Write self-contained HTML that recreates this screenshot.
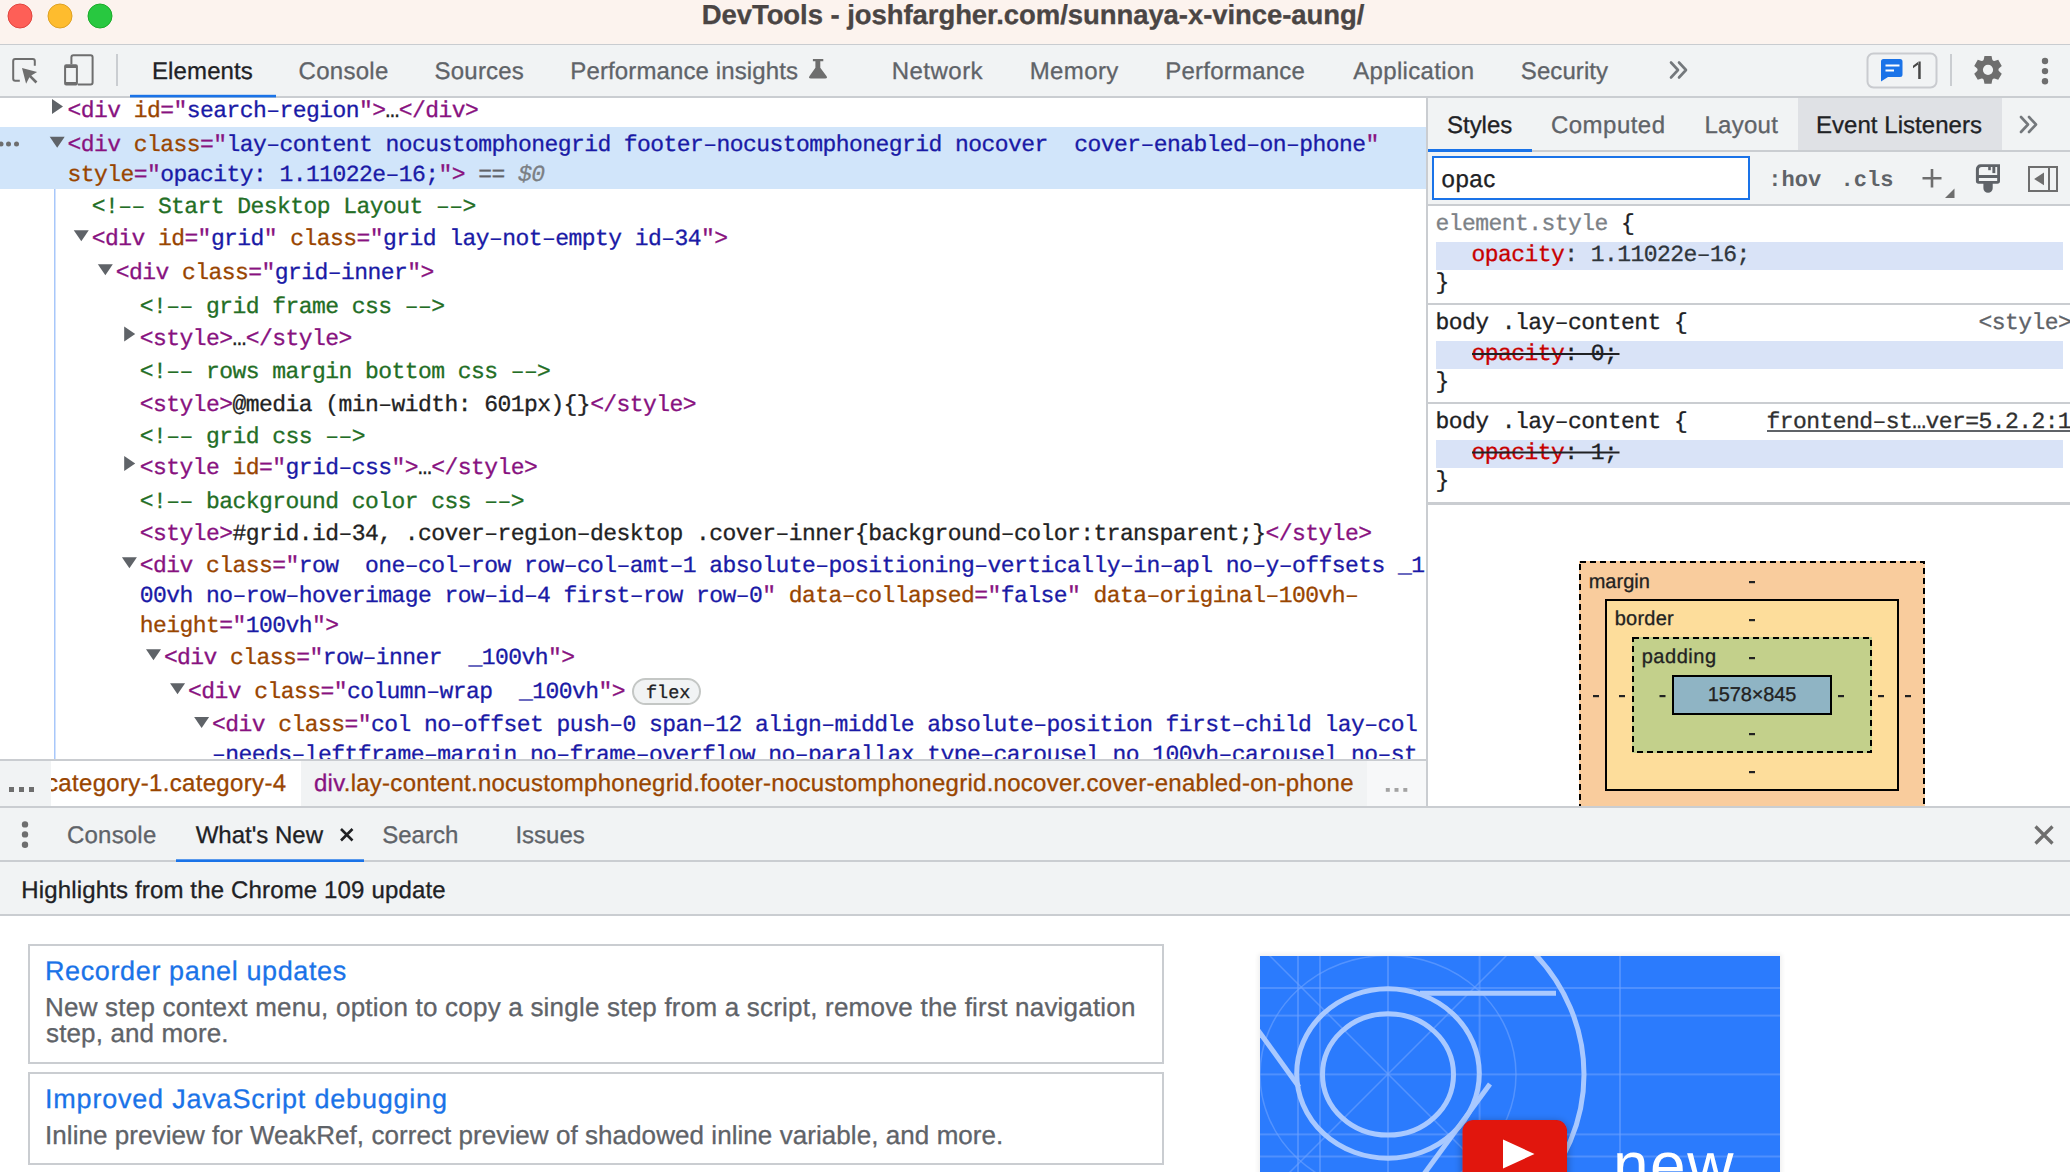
<!DOCTYPE html>
<html><head><meta charset="utf-8"><title>DevTools</title>
<style>html,body{margin:0;padding:0;background:#fff;overflow:hidden} svg{display:block} text{text-rendering:geometricPrecision}</style>
</head><body>
<svg width="2070" height="1172" viewBox="0 0 2070 1172">
<defs>
<clipPath id="elclip"><rect x="0" y="98" width="1426" height="661"/></clipPath>
<clipPath id="bcclip"><rect x="51" y="761" width="250" height="46"/></clipPath>
<filter id="blur" x="-10%" y="-10%" width="120%" height="120%"><feGaussianBlur stdDeviation="2"/></filter>
<filter id="sh" x="-30%" y="-30%" width="160%" height="160%"><feDropShadow dx="0" dy="2" stdDeviation="4" flood-opacity="0.35"/></filter>
</defs>
<rect x="0" y="0" width="2070" height="1172" fill="#ffffff" />
<rect x="0" y="0" width="2070" height="44" fill="#fcf3ee" />
<rect x="0" y="44" width="2070" height="1" fill="#c9ccd0" />
<rect x="0" y="45" width="2070" height="1" fill="#e4e6e9" />
<rect x="0" y="45" width="2070" height="51" fill="#f1f3f4" />
<rect x="0" y="96" width="2070" height="2" fill="#cacdd1" />
<circle cx="20" cy="16" r="12" fill="#fe5f57" stroke="#e0443e" stroke-width="1"/>
<circle cx="60" cy="16" r="12" fill="#febc2e" stroke="#dea123" stroke-width="1"/>
<circle cx="100" cy="16" r="12" fill="#28c840" stroke="#1aab29" stroke-width="1"/>
<text x="701.70" y="24" fill="#4a4544" stroke="#4a4544" stroke-width="0.3" font-family="Liberation Sans" font-size="27.5" font-weight="700" letter-spacing="-0.064" xml:space="preserve" >DevTools - joshfargher.com/sunnaya-x-vince-aung/</text>
<path d="M19.8 80.8 H15.2 A2 2 0 0 1 13.2 78.8 V60.9 A2 2 0 0 1 15.2 58.9 H32.8 A2 2 0 0 1 34.8 60.9 V65.8" fill="none" stroke="#6e6e6e" stroke-width="2"/>
<path d="M22 68 L37.1 72.1 L31.3 75.4 L37.4 81.5 L35.5 83.4 L29.4 77.3 L26.1 83.7 Z" fill="#6e6e6e"/>
<path d="M71.4 64.2 V57.2 A2 2 0 0 1 73.4 55.2 H90.6 A2 2 0 0 1 92.6 57.2 V82.6 A2 2 0 0 1 90.6 84.6 H77.9" fill="none" stroke="#6e6e6e" stroke-width="2"/>
<path d="M66.1 64.2 H75.9 A2 2 0 0 1 77.9 66.2 V83.6 A2 2 0 0 1 75.9 85.6 H66.1 A2 2 0 0 1 64.1 83.6 V66.2 A2 2 0 0 1 66.1 64.2 Z M66.1 68 V82.1 H75.9 V68 Z" fill="#6e6e6e" fill-rule="evenodd"/>
<rect x="116" y="54" width="2" height="32" fill="#cacdd1" />
<text x="152.00" y="79" fill="#202124" stroke="#202124" stroke-width="0.3" font-family="Liberation Sans" font-size="24" font-weight="400" letter-spacing="0.114" xml:space="preserve" >Elements</text>
<text x="298.60" y="79" fill="#5f6368" stroke="#5f6368" stroke-width="0.3" font-family="Liberation Sans" font-size="24" font-weight="400" letter-spacing="0.267" xml:space="preserve" >Console</text>
<text x="434.60" y="79" fill="#5f6368" stroke="#5f6368" stroke-width="0.3" font-family="Liberation Sans" font-size="24" font-weight="400" letter-spacing="0.200" xml:space="preserve" >Sources</text>
<text x="570.30" y="79" fill="#5f6368" stroke="#5f6368" stroke-width="0.3" font-family="Liberation Sans" font-size="24" font-weight="400" letter-spacing="0.121" xml:space="preserve" >Performance insights</text>
<text x="891.70" y="79" fill="#5f6368" stroke="#5f6368" stroke-width="0.3" font-family="Liberation Sans" font-size="24" font-weight="400" letter-spacing="0.483" xml:space="preserve" >Network</text>
<text x="1029.70" y="79" fill="#5f6368" stroke="#5f6368" stroke-width="0.3" font-family="Liberation Sans" font-size="24" font-weight="400" letter-spacing="0.380" xml:space="preserve" >Memory</text>
<text x="1165.30" y="79" fill="#5f6368" stroke="#5f6368" stroke-width="0.3" font-family="Liberation Sans" font-size="24" font-weight="400" letter-spacing="0.220" xml:space="preserve" >Performance</text>
<text x="1353.20" y="79" fill="#5f6368" stroke="#5f6368" stroke-width="0.3" font-family="Liberation Sans" font-size="24" font-weight="400" letter-spacing="0.340" xml:space="preserve" >Application</text>
<text x="1520.80" y="79" fill="#5f6368" stroke="#5f6368" stroke-width="0.3" font-family="Liberation Sans" font-size="24" font-weight="400" letter-spacing="0.086" xml:space="preserve" >Security</text>
<rect x="130" y="94.8" width="146" height="2.6" fill="#1a73e8" />
<path d="M812.9 59 H823.3 V61.2 H820.3 V67.7 L826.6 76.2 Q827.8 78.4 825.2 78.4 H810.8 Q808.2 78.4 809.4 76.2 L815.4 67.7 V61.2 H812.9 Z" fill="#6e6e6e"/>
<path d="M1671 62.5 L1678 70.0 L1671 77.5 M1679 62.5 L1686 70.0 L1679 77.5" fill="none" stroke="#74787c" stroke-width="2.6" stroke-linecap="round" stroke-linejoin="round"/>
<rect x="1867.5" y="53.5" width="69" height="34" rx="6" fill="none" stroke="#c9cbcf" stroke-width="2"/>
<path d="M1884 59 H1900 A2.5 2.5 0 0 1 1902.5 61.5 V74.5 A2.5 2.5 0 0 1 1900 77 H1888 L1881 81.5 V61.5 A2.5 2.5 0 0 1 1883.5 59 Z" fill="#1a73e8"/>
<rect x="1885.5" y="64.5" width="14" height="2" fill="#ffffff" />
<rect x="1885.5" y="69.5" width="8.5" height="2" fill="#ffffff" />
<path d="M1918.2 61.5 H1920.7 V79 H1918.2 Z M1918.6 61.5 L1913 65.8 L1913 68.3 L1918.6 64.3 Z" fill="#474747"/>
<rect x="1950" y="54" width="2" height="32" fill="#cacdd1" />
<path d="M1983.84 59.08 L1984.46 55.94 L1991.54 55.94 L1992.16 59.08 L1992.46 60.07 L1993.23 60.75 L1994.19 61.07 L1995.21 60.84 L1998.23 59.81 L2001.77 65.94 L1999.36 68.04 L1998.65 68.80 L1998.45 69.80 L1998.65 70.80 L1999.36 71.56 L2001.77 73.66 L1998.23 79.79 L1995.21 78.76 L1994.19 78.53 L1993.22 78.85 L1992.46 79.53 L1992.16 80.52 L1991.54 83.66 L1984.46 83.66 L1983.84 80.52 L1983.54 79.53 L1982.77 78.85 L1981.81 78.53 L1980.79 78.76 L1977.77 79.79 L1974.23 73.66 L1976.64 71.56 L1977.35 70.80 L1977.55 69.80 L1977.35 68.80 L1976.64 68.04 L1974.23 65.94 L1977.77 59.81 L1980.79 60.84 L1981.81 61.07 L1982.78 60.75 L1983.54 60.07 Z M1993.1 69.8 A5.1 5.1 0 1 0 1982.9 69.8 A5.1 5.1 0 1 0 1993.1 69.8 Z" fill="#6e6e6e" fill-rule="evenodd"/>
<circle cx="2045" cy="61" r="3.2" fill="#6e6e6e"/>
<circle cx="2045" cy="71.1" r="3.2" fill="#6e6e6e"/>
<circle cx="2045" cy="81.2" r="3.2" fill="#6e6e6e"/>
<rect x="0" y="127" width="1426" height="62" fill="#d1e5fa" />
<rect x="54" y="189" width="1.5" height="570" fill="#a8c7fa" />
<circle cx="1" cy="144" r="2.5" fill="#6e6e6e"/>
<circle cx="8.5" cy="144" r="2.5" fill="#6e6e6e"/>
<circle cx="16.5" cy="144" r="2.5" fill="#6e6e6e"/>
<g clip-path="url(#elclip)">
<text x="67.6" y="117" font-family="Liberation Mono" font-size="23.0" letter-spacing="-0.558" xml:space="preserve" ><tspan fill="#881280" stroke="#881280" stroke-width="0.3" >&lt;div</tspan><tspan fill="#994500" stroke="#994500" stroke-width="0.3" > id</tspan><tspan fill="#881280" stroke="#881280" stroke-width="0.3" >="</tspan><tspan fill="#1a1aa6" stroke="#1a1aa6" stroke-width="0.3" >search–region</tspan><tspan fill="#881280" stroke="#881280" stroke-width="0.3" >"&gt;</tspan><tspan fill="#222222" stroke="#222222" stroke-width="0.3" >…</tspan><tspan fill="#881280" stroke="#881280" stroke-width="0.3" >&lt;/div&gt;</tspan></text>
<path d="M51.99999999999999 99 L62.99999999999999 106.5 L51.99999999999999 114 Z" fill="#5f6368"/>
<text x="67.6" y="151" font-family="Liberation Mono" font-size="23.0" letter-spacing="-0.558" xml:space="preserve" ><tspan fill="#881280" stroke="#881280" stroke-width="0.3" >&lt;div</tspan><tspan fill="#994500" stroke="#994500" stroke-width="0.3" > class</tspan><tspan fill="#881280" stroke="#881280" stroke-width="0.3" >="</tspan><tspan fill="#1a1aa6" stroke="#1a1aa6" stroke-width="0.3" >lay–content nocustomphonegrid footer–nocustomphonegrid nocover  cover–enabled–on–phone</tspan><tspan fill="#881280" stroke="#881280" stroke-width="0.3" >"</tspan></text>
<path d="M49.699999999999996 136.8 L64.69999999999999 136.8 L57.199999999999996 147.8 Z" fill="#5f6368"/>
<text x="67.6" y="181" font-family="Liberation Mono" font-size="23.0" letter-spacing="-0.558" xml:space="preserve" ><tspan fill="#994500" stroke="#994500" stroke-width="0.3" >style</tspan><tspan fill="#881280" stroke="#881280" stroke-width="0.3" >="</tspan><tspan fill="#1a1aa6" stroke="#1a1aa6" stroke-width="0.3" >opacity: 1.11022e–16;</tspan><tspan fill="#881280" stroke="#881280" stroke-width="0.3" >"</tspan><tspan fill="#881280" stroke="#881280" stroke-width="0.3" >&gt;</tspan><tspan fill="#5f6368" stroke="#5f6368" stroke-width="0.3" > == </tspan><tspan fill="#7b7f84" stroke="#7b7f84" stroke-width="0.3" font-style="italic">$0</tspan></text>
<text x="91.66999999999999" y="213" font-family="Liberation Mono" font-size="23.0" letter-spacing="-0.558" xml:space="preserve" ><tspan fill="#236e25" stroke="#236e25" stroke-width="0.3" >&lt;!–– Start Desktop Layout ––&gt;</tspan></text>
<text x="91.66999999999999" y="244.5" font-family="Liberation Mono" font-size="23.0" letter-spacing="-0.558" xml:space="preserve" ><tspan fill="#881280" stroke="#881280" stroke-width="0.3" >&lt;div</tspan><tspan fill="#994500" stroke="#994500" stroke-width="0.3" > id</tspan><tspan fill="#881280" stroke="#881280" stroke-width="0.3" >="</tspan><tspan fill="#1a1aa6" stroke="#1a1aa6" stroke-width="0.3" >grid</tspan><tspan fill="#881280" stroke="#881280" stroke-width="0.3" >"</tspan><tspan fill="#994500" stroke="#994500" stroke-width="0.3" > class</tspan><tspan fill="#881280" stroke="#881280" stroke-width="0.3" >="</tspan><tspan fill="#1a1aa6" stroke="#1a1aa6" stroke-width="0.3" >grid lay–not–empty id–34</tspan><tspan fill="#881280" stroke="#881280" stroke-width="0.3" >"&gt;</tspan></text>
<path d="M73.76999999999998 230.3 L88.76999999999998 230.3 L81.26999999999998 241.3 Z" fill="#5f6368"/>
<text x="115.74" y="278.5" font-family="Liberation Mono" font-size="23.0" letter-spacing="-0.558" xml:space="preserve" ><tspan fill="#881280" stroke="#881280" stroke-width="0.3" >&lt;div</tspan><tspan fill="#994500" stroke="#994500" stroke-width="0.3" > class</tspan><tspan fill="#881280" stroke="#881280" stroke-width="0.3" >="</tspan><tspan fill="#1a1aa6" stroke="#1a1aa6" stroke-width="0.3" >grid–inner</tspan><tspan fill="#881280" stroke="#881280" stroke-width="0.3" >"&gt;</tspan></text>
<path d="M97.84 264.3 L112.84 264.3 L105.34 275.3 Z" fill="#5f6368"/>
<text x="139.81" y="312.5" font-family="Liberation Mono" font-size="23.0" letter-spacing="-0.558" xml:space="preserve" ><tspan fill="#236e25" stroke="#236e25" stroke-width="0.3" >&lt;!–– grid frame css ––&gt;</tspan></text>
<text x="139.81" y="344.5" font-family="Liberation Mono" font-size="23.0" letter-spacing="-0.558" xml:space="preserve" ><tspan fill="#881280" stroke="#881280" stroke-width="0.3" >&lt;style&gt;</tspan><tspan fill="#222222" stroke="#222222" stroke-width="0.3" >…</tspan><tspan fill="#881280" stroke="#881280" stroke-width="0.3" >&lt;/style&gt;</tspan></text>
<path d="M124.21000000000001 326.5 L135.21 334.0 L124.21000000000001 341.5 Z" fill="#5f6368"/>
<text x="139.81" y="378.3" font-family="Liberation Mono" font-size="23.0" letter-spacing="-0.558" xml:space="preserve" ><tspan fill="#236e25" stroke="#236e25" stroke-width="0.3" >&lt;!–– rows margin bottom css ––&gt;</tspan></text>
<text x="139.81" y="410.5" font-family="Liberation Mono" font-size="23.0" letter-spacing="-0.558" xml:space="preserve" ><tspan fill="#881280" stroke="#881280" stroke-width="0.3" >&lt;style&gt;</tspan><tspan fill="#222222" stroke="#222222" stroke-width="0.3" >@media (min–width: 601px){}</tspan><tspan fill="#881280" stroke="#881280" stroke-width="0.3" >&lt;/style&gt;</tspan></text>
<text x="139.81" y="442.5" font-family="Liberation Mono" font-size="23.0" letter-spacing="-0.558" xml:space="preserve" ><tspan fill="#236e25" stroke="#236e25" stroke-width="0.3" >&lt;!–– grid css ––&gt;</tspan></text>
<text x="139.81" y="474" font-family="Liberation Mono" font-size="23.0" letter-spacing="-0.558" xml:space="preserve" ><tspan fill="#881280" stroke="#881280" stroke-width="0.3" >&lt;style</tspan><tspan fill="#994500" stroke="#994500" stroke-width="0.3" > id</tspan><tspan fill="#881280" stroke="#881280" stroke-width="0.3" >="</tspan><tspan fill="#1a1aa6" stroke="#1a1aa6" stroke-width="0.3" >grid–css</tspan><tspan fill="#881280" stroke="#881280" stroke-width="0.3" >"&gt;</tspan><tspan fill="#222222" stroke="#222222" stroke-width="0.3" >…</tspan><tspan fill="#881280" stroke="#881280" stroke-width="0.3" >&lt;/style&gt;</tspan></text>
<path d="M124.21000000000001 456 L135.21 463.5 L124.21000000000001 471 Z" fill="#5f6368"/>
<text x="139.81" y="508" font-family="Liberation Mono" font-size="23.0" letter-spacing="-0.558" xml:space="preserve" ><tspan fill="#236e25" stroke="#236e25" stroke-width="0.3" >&lt;!–– background color css ––&gt;</tspan></text>
<text x="139.81" y="540" font-family="Liberation Mono" font-size="23.0" letter-spacing="-0.558" xml:space="preserve" ><tspan fill="#881280" stroke="#881280" stroke-width="0.3" >&lt;style&gt;</tspan><tspan fill="#222222" stroke="#222222" stroke-width="0.3" >#grid.id–34, .cover–region–desktop .cover–inner{background–color:transparent;}</tspan><tspan fill="#881280" stroke="#881280" stroke-width="0.3" >&lt;/style&gt;</tspan></text>
<text x="139.81" y="571.5" font-family="Liberation Mono" font-size="23.0" letter-spacing="-0.558" xml:space="preserve" ><tspan fill="#881280" stroke="#881280" stroke-width="0.3" >&lt;div</tspan><tspan fill="#994500" stroke="#994500" stroke-width="0.3" > class</tspan><tspan fill="#881280" stroke="#881280" stroke-width="0.3" >="</tspan><tspan fill="#1a1aa6" stroke="#1a1aa6" stroke-width="0.3" >row  one–col–row row–col–amt–1 absolute–positioning–vertically–in–apl no–y–offsets _1</tspan></text>
<path d="M121.91 557.3 L136.91 557.3 L129.41 568.3 Z" fill="#5f6368"/>
<text x="139.81" y="601.5" font-family="Liberation Mono" font-size="23.0" letter-spacing="-0.558" xml:space="preserve" ><tspan fill="#1a1aa6" stroke="#1a1aa6" stroke-width="0.3" >00vh no–row–hoverimage row–id–4 first–row row–0</tspan><tspan fill="#881280" stroke="#881280" stroke-width="0.3" >"</tspan><tspan fill="#994500" stroke="#994500" stroke-width="0.3" > data–collapsed</tspan><tspan fill="#881280" stroke="#881280" stroke-width="0.3" >="</tspan><tspan fill="#1a1aa6" stroke="#1a1aa6" stroke-width="0.3" >false</tspan><tspan fill="#881280" stroke="#881280" stroke-width="0.3" >"</tspan><tspan fill="#994500" stroke="#994500" stroke-width="0.3" > data–original–100vh–</tspan></text>
<text x="139.81" y="631.5" font-family="Liberation Mono" font-size="23.0" letter-spacing="-0.558" xml:space="preserve" ><tspan fill="#994500" stroke="#994500" stroke-width="0.3" >height</tspan><tspan fill="#881280" stroke="#881280" stroke-width="0.3" >="</tspan><tspan fill="#1a1aa6" stroke="#1a1aa6" stroke-width="0.3" >100vh</tspan><tspan fill="#881280" stroke="#881280" stroke-width="0.3" >"&gt;</tspan></text>
<text x="163.88" y="663.5" font-family="Liberation Mono" font-size="23.0" letter-spacing="-0.558" xml:space="preserve" ><tspan fill="#881280" stroke="#881280" stroke-width="0.3" >&lt;div</tspan><tspan fill="#994500" stroke="#994500" stroke-width="0.3" > class</tspan><tspan fill="#881280" stroke="#881280" stroke-width="0.3" >="</tspan><tspan fill="#1a1aa6" stroke="#1a1aa6" stroke-width="0.3" >row–inner  _100vh</tspan><tspan fill="#881280" stroke="#881280" stroke-width="0.3" >"&gt;</tspan></text>
<path d="M145.98 649.3 L160.98 649.3 L153.48 660.3 Z" fill="#5f6368"/>
<text x="187.95" y="697.5" font-family="Liberation Mono" font-size="23.0" letter-spacing="-0.558" xml:space="preserve" ><tspan fill="#881280" stroke="#881280" stroke-width="0.3" >&lt;div</tspan><tspan fill="#994500" stroke="#994500" stroke-width="0.3" > class</tspan><tspan fill="#881280" stroke="#881280" stroke-width="0.3" >="</tspan><tspan fill="#1a1aa6" stroke="#1a1aa6" stroke-width="0.3" >column–wrap  _100vh</tspan><tspan fill="#881280" stroke="#881280" stroke-width="0.3" >"&gt;</tspan></text>
<path d="M170.04999999999998 683.3 L185.04999999999998 683.3 L177.54999999999998 694.3 Z" fill="#5f6368"/>
<text x="212.02" y="731.3" font-family="Liberation Mono" font-size="23.0" letter-spacing="-0.558" xml:space="preserve" ><tspan fill="#881280" stroke="#881280" stroke-width="0.3" >&lt;div</tspan><tspan fill="#994500" stroke="#994500" stroke-width="0.3" > class</tspan><tspan fill="#881280" stroke="#881280" stroke-width="0.3" >="</tspan><tspan fill="#1a1aa6" stroke="#1a1aa6" stroke-width="0.3" >col no–offset push–0 span–12 align–middle absolute–position first–child lay–col</tspan></text>
<path d="M194.12 717.0999999999999 L209.12 717.0999999999999 L201.62 728.0999999999999 Z" fill="#5f6368"/>
<text x="212.02" y="761.3" font-family="Liberation Mono" font-size="23.0" letter-spacing="-0.558" xml:space="preserve" ><tspan fill="#1a1aa6" stroke="#1a1aa6" stroke-width="0.3" >–needs–leftframe–margin no–frame–overflow no–parallax type–carousel no 100vh–carousel no–st</tspan></text>
<rect x="633" y="679" width="67" height="25" rx="12.5" fill="#f1f3f4" stroke="#c4c7c5" stroke-width="2"/>
<text x="646" y="697.5" font-family="Liberation Mono" font-size="18.5" xml:space="preserve" ><tspan fill="#202124" stroke="#202124" stroke-width="0.3" >flex</tspan></text>
</g>
<rect x="1426" y="98" width="2" height="710" fill="#cacdd1" />
<rect x="0" y="759" width="1426" height="2" fill="#cacdd1" />
<rect x="0" y="761" width="1426" height="46" fill="#f1f3f4" />
<rect x="51" y="761" width="250" height="46" fill="#ffffff" />
<g clip-path="url(#bcclip)">
<text x="46.00" y="791.2" fill="#994500" stroke="#994500" stroke-width="0.3" font-family="Liberation Sans" font-size="24" font-weight="400" letter-spacing="0.330" xml:space="preserve" >category-1.category-4</text>
</g>
<text x="314.00" y="791.2" fill="#202124" font-family="Liberation Sans" font-size="24" font-weight="400" letter-spacing="0.265" xml:space="preserve" ><tspan fill="#881280" stroke="#881280" stroke-width="0.3">div</tspan><tspan fill="#994500" stroke="#994500" stroke-width="0.3">.lay-content.nocustomphonegrid.footer-nocustomphonegrid.nocover.cover-enabled-on-phone</tspan></text>
<rect x="9.0" y="787" width="5" height="5" fill="#6e6e6e" />
<rect x="19.0" y="787" width="5" height="5" fill="#6e6e6e" />
<rect x="29.0" y="787" width="5" height="5" fill="#6e6e6e" />
<rect x="1367" y="761" width="59" height="46" fill="#f7f8f9" />
<rect x="1385.8" y="788" width="4" height="3.8" fill="#a3a3a3" />
<rect x="1394.5" y="788" width="4" height="3.8" fill="#a3a3a3" />
<rect x="1403.3" y="788" width="4" height="3.8" fill="#a3a3a3" />
<rect x="1428" y="98" width="642" height="53" fill="#f1f3f4" />
<rect x="1798" y="98" width="204" height="52" fill="#dfe1e5" />
<rect x="1428" y="150" width="642" height="2" fill="#cacdd1" />
<text x="1447.00" y="132.7" fill="#202124" stroke="#202124" stroke-width="0.3" font-family="Liberation Sans" font-size="24" font-weight="400" letter-spacing="-0.020" xml:space="preserve" >Styles</text>
<text x="1551.00" y="132.7" fill="#5f6368" stroke="#5f6368" stroke-width="0.3" font-family="Liberation Sans" font-size="24" font-weight="400" letter-spacing="0.471" xml:space="preserve" >Computed</text>
<text x="1704.50" y="132.7" fill="#5f6368" stroke="#5f6368" stroke-width="0.3" font-family="Liberation Sans" font-size="24" font-weight="400" letter-spacing="0.260" xml:space="preserve" >Layout</text>
<text x="1816.00" y="132.7" fill="#202124" stroke="#202124" stroke-width="0.3" font-family="Liberation Sans" font-size="24" font-weight="400" letter-spacing="0.036" xml:space="preserve" >Event Listeners</text>
<rect x="1428" y="149" width="104" height="3" fill="#1a73e8" />
<path d="M2021 117 L2028 124.5 L2021 132 M2029 117 L2036 124.5 L2029 132" fill="none" stroke="#74787c" stroke-width="2.6" stroke-linecap="round" stroke-linejoin="round"/>
<rect x="1428" y="152" width="642" height="52" fill="#f1f3f4" />
<rect x="1428" y="204" width="642" height="2" fill="#cacdd1" />
<rect x="1433" y="157" width="316" height="42" fill="#ffffff" stroke="#1a73e8" stroke-width="2"/>
<text x="1441.60" y="186.5" fill="#202124" stroke="#202124" stroke-width="0.3" font-family="Liberation Sans" font-size="24" font-weight="400" letter-spacing="0.533" xml:space="preserve" >opac</text>
<text x="1768.2" y="186" font-family="Liberation Mono" font-size="22.07" font-weight="700" fill="#5f6368" xml:space="preserve">:hov</text>
<text x="1840.5" y="186" font-family="Liberation Mono" font-size="22.07" font-weight="700" fill="#5f6368" xml:space="preserve">.cls</text>
<path d="M1932 169 V187.5 M1922.5 178.2 H1941.5" stroke="#6e6e6e" stroke-width="2.6"/>
<path d="M1954.5 188.5 V198 H1945 Z" fill="#6e6e6e"/>
<path d="M1980.5 164.3 H2000 V181 Q2000 183.7 1997.3 183.7 H1992.7 V188.2 A4.65 4.65 0 0 1 1983.4 188.2 V183.7 H1978.6 Q1975.9 183.7 1975.9 181 V168.9 A4.6 4.6 0 0 1 1980.5 164.3 Z M1982 167 H1997.2 V175 H1978.9 V170 A3 3 0 0 1 1982 167 Z M1978.9 177.9 H1997.2 V181.1 H1978.9 Z" fill="#5f6368" fill-rule="evenodd"/>
<rect x="1988.2" y="167" width="2.6" height="3.2" fill="#5f6368" />
<rect x="1992.4" y="167" width="2.9" height="6.1" fill="#5f6368" />
<rect x="2029" y="167" width="28" height="24" fill="none" stroke="#6e6e6e" stroke-width="2"/>
<rect x="2048" y="167" width="2" height="24" fill="#6e6e6e" />
<path d="M2044 172.6 V185.3 L2034.1 179 Z" fill="#6e6e6e"/>
<text x="1435.5" y="230" font-family="Liberation Mono" font-size="23.0" letter-spacing="-0.558" xml:space="preserve" ><tspan fill="#7d8287" stroke="#7d8287" stroke-width="0.3" >element.style</tspan><tspan fill="#202124" stroke="#202124" stroke-width="0.3" > {</tspan></text>
<rect x="1436" y="242" width="627" height="28" fill="#d9e3f7" />
<text x="1471.5" y="261.3" font-family="Liberation Mono" font-size="23.0" letter-spacing="-0.558" xml:space="preserve" ><tspan fill="#c80000" stroke="#c80000" stroke-width="0.3" >opacity</tspan><tspan fill="#2f353b" stroke="#2f353b" stroke-width="0.3" >: 1.11022e–16;</tspan></text>
<text x="1435.5" y="288.5" font-family="Liberation Mono" font-size="23.0" letter-spacing="-0.558" xml:space="preserve" ><tspan fill="#202124" stroke="#202124" stroke-width="0.3" >}</tspan></text>
<rect x="1428" y="303" width="642" height="2" fill="#cacdd1" />
<text x="1435.5" y="328.8" font-family="Liberation Mono" font-size="23.0" letter-spacing="-0.558" xml:space="preserve" ><tspan fill="#202124" stroke="#202124" stroke-width="0.3" >body .lay–content {</tspan></text>
<text x="1978.5" y="328.8" font-family="Liberation Mono" font-size="23.0" letter-spacing="-0.558" xml:space="preserve" ><tspan fill="#5f6368" stroke="#5f6368" stroke-width="0.3" >&lt;style&gt;</tspan></text>
<rect x="1436" y="341" width="627" height="28" fill="#d9e3f7" />
<text x="1471.5" y="360.4" font-family="Liberation Mono" font-size="23.0" letter-spacing="-0.558" xml:space="preserve" ><tspan fill="#c80000" stroke="#c80000" stroke-width="0.3" >opacity</tspan><tspan fill="#202124" stroke="#202124" stroke-width="0.3" >: </tspan><tspan fill="#202124" stroke="#202124" stroke-width="0.3" >0</tspan><tspan fill="#202124" stroke="#202124" stroke-width="0.3" >;</tspan></text>
<rect x="1472" y="353" width="147.5" height="2" fill="#202124" />
<text x="1435.5" y="387.8" font-family="Liberation Mono" font-size="23.0" letter-spacing="-0.558" xml:space="preserve" ><tspan fill="#202124" stroke="#202124" stroke-width="0.3" >}</tspan></text>
<rect x="1428" y="402" width="642" height="2" fill="#cacdd1" />
<text x="1435.5" y="427.7" font-family="Liberation Mono" font-size="23.0" letter-spacing="-0.558" xml:space="preserve" ><tspan fill="#202124" stroke="#202124" stroke-width="0.3" >body .lay–content {</tspan></text>
<text x="1766.5" y="427.7" font-family="Liberation Mono" font-size="23.0" letter-spacing="-0.558" xml:space="preserve" ><tspan fill="#303030" stroke="#303030" stroke-width="0.3" >frontend–st…ver=5.2.2:1</tspan></text>
<rect x="1767" y="430" width="303" height="2" fill="#5f6368" />
<rect x="1436" y="440" width="627" height="28" fill="#d9e3f7" />
<text x="1471.5" y="459" font-family="Liberation Mono" font-size="23.0" letter-spacing="-0.558" xml:space="preserve" ><tspan fill="#c80000" stroke="#c80000" stroke-width="0.3" >opacity</tspan><tspan fill="#202124" stroke="#202124" stroke-width="0.3" >: 1;</tspan></text>
<rect x="1472" y="451.5" width="147.5" height="2" fill="#202124" />
<text x="1435.5" y="486.8" font-family="Liberation Mono" font-size="23.0" letter-spacing="-0.558" xml:space="preserve" ><tspan fill="#202124" stroke="#202124" stroke-width="0.3" >}</tspan></text>
<rect x="1428" y="502" width="642" height="3" fill="#cacdd1" />
<g>
<rect x="1579" y="561" width="346" height="245" fill="#f9cc9d" />
<rect x="1580" y="562" width="344" height="260" fill="none" stroke="#000" stroke-width="2" stroke-dasharray="6 4"/>
<rect x="1605" y="599" width="294" height="192" fill="#fddd9b" />
<rect x="1606" y="600" width="292" height="190" fill="none" stroke="#000" stroke-width="2"/>
<rect x="1632" y="637" width="240" height="116" fill="#c3d08b" />
<rect x="1633" y="638" width="238" height="114" fill="none" stroke="#000" stroke-width="2" stroke-dasharray="6 4"/>
<rect x="1672" y="675" width="160" height="40" fill="#8fb4c4" />
<rect x="1673" y="676" width="158" height="38" fill="none" stroke="#000" stroke-width="2"/>
<text x="1588.70" y="588" fill="#222222" stroke="#222222" stroke-width="0.3" font-family="Liberation Sans" font-size="20" font-weight="400" letter-spacing="0.020" xml:space="preserve" >margin</text>
<text x="1614.80" y="625.4" fill="#222222" stroke="#222222" stroke-width="0.3" font-family="Liberation Sans" font-size="20" font-weight="400" letter-spacing="0.200" xml:space="preserve" >border</text>
<text x="1641.70" y="663.1" fill="#222222" stroke="#222222" stroke-width="0.3" font-family="Liberation Sans" font-size="20" font-weight="400" letter-spacing="0.533" xml:space="preserve" >padding</text>
<text x="1707.70" y="700.8" fill="#222222" stroke="#222222" stroke-width="0.3" font-family="Liberation Sans" font-size="20" font-weight="400" letter-spacing="-0.129" xml:space="preserve" >1578×845</text>
<rect x="1749" y="581" width="6" height="2.2" fill="#222222" />
<rect x="1749" y="619" width="6" height="2.2" fill="#222222" />
<rect x="1749" y="657" width="6" height="2.2" fill="#222222" />
<rect x="1593" y="695" width="6" height="2.2" fill="#222222" />
<rect x="1619" y="695" width="6" height="2.2" fill="#222222" />
<rect x="1659.5" y="695" width="6" height="2.2" fill="#222222" />
<rect x="1838" y="695" width="6" height="2.2" fill="#222222" />
<rect x="1878" y="695" width="6" height="2.2" fill="#222222" />
<rect x="1905" y="695" width="6" height="2.2" fill="#222222" />
<rect x="1749" y="733" width="6" height="2.2" fill="#222222" />
<rect x="1749" y="771" width="6" height="2.2" fill="#222222" />
</g>
<rect x="1428" y="806" width="642" height="2" fill="#cacdd1" />
<rect x="0" y="806" width="2070" height="2" fill="#cacdd1" />
<rect x="0" y="808" width="2070" height="52" fill="#f1f3f4" />
<rect x="0" y="860" width="2070" height="2" fill="#cacdd1" />
<circle cx="25" cy="824.4" r="3.2" fill="#6e6e6e"/>
<circle cx="25" cy="834.4" r="3.2" fill="#6e6e6e"/>
<circle cx="25" cy="844.7" r="3.2" fill="#6e6e6e"/>
<text x="67.00" y="842.8" fill="#5f6368" stroke="#5f6368" stroke-width="0.3" font-family="Liberation Sans" font-size="24" font-weight="400" letter-spacing="0.200" xml:space="preserve" >Console</text>
<text x="195.70" y="842.8" fill="#202124" stroke="#202124" stroke-width="0.3" font-family="Liberation Sans" font-size="24" font-weight="400" xml:space="preserve" >What's New</text>
<text x="382.20" y="842.8" fill="#5f6368" stroke="#5f6368" stroke-width="0.3" font-family="Liberation Sans" font-size="24" font-weight="400" xml:space="preserve" >Search</text>
<text x="515.40" y="842.8" fill="#5f6368" stroke="#5f6368" stroke-width="0.3" font-family="Liberation Sans" font-size="24" font-weight="400" xml:space="preserve" >Issues</text>
<path d="M341 829 L352.5 840.5 M352.5 829 L341 840.5" stroke="#202124" stroke-width="2.6"/>
<rect x="176" y="859.3" width="188" height="2.7" fill="#1a73e8" />
<path d="M2035.5 826.5 L2052.5 843.5 M2052.5 826.5 L2035.5 843.5" stroke="#6e6e6e" stroke-width="3.2"/>
<rect x="0" y="862" width="2070" height="53" fill="#f1f3f4" />
<rect x="0" y="914" width="2070" height="2" fill="#cacdd1" />
<text x="21.20" y="897.8" fill="#202124" stroke="#202124" stroke-width="0.3" font-family="Liberation Sans" font-size="24" font-weight="400" letter-spacing="0.153" xml:space="preserve" >Highlights from the Chrome 109 update</text>
<rect x="29" y="945" width="1134" height="118" fill="#fff" stroke="#cacdd1" stroke-width="2"/>
<rect x="29" y="1073" width="1134" height="91" fill="#fff" stroke="#cacdd1" stroke-width="2"/>
<text x="45.00" y="979.7" fill="#1a73e8" stroke="#1a73e8" stroke-width="0.3" font-family="Liberation Sans" font-size="27" font-weight="400" letter-spacing="0.619" xml:space="preserve" >Recorder panel updates</text>
<text x="45.00" y="1015.7" fill="#5f6368" stroke="#5f6368" stroke-width="0.3" font-family="Liberation Sans" font-size="26" font-weight="400" letter-spacing="0.211" xml:space="preserve" >New step context menu, option to copy a single step from a script, remove the first navigation</text>
<text x="46.00" y="1042.2" fill="#5f6368" stroke="#5f6368" stroke-width="0.3" font-family="Liberation Sans" font-size="26" font-weight="400" letter-spacing="0.136" xml:space="preserve" >step, and more.</text>
<text x="45.00" y="1107.7" fill="#1a73e8" stroke="#1a73e8" stroke-width="0.3" font-family="Liberation Sans" font-size="27" font-weight="400" letter-spacing="0.793" xml:space="preserve" >Improved JavaScript debugging</text>
<text x="45.00" y="1143.7" fill="#5f6368" stroke="#5f6368" stroke-width="0.3" font-family="Liberation Sans" font-size="26" font-weight="400" letter-spacing="0.062" xml:space="preserve" >Inline preview for WeakRef, correct preview of shadowed inline variable, and more.</text>
<rect x="1258" y="954" width="524" height="230" fill="#000" opacity="0.06" filter="url(#blur)"/>
<svg x="1260" y="956" width="520" height="216" viewBox="1260 956 520 216">
<rect x="1260" y="956" width="520" height="230" fill="#2b7bfd" />
<rect x="1297" y="956" width="2" height="230" fill="#6ea3ff" opacity="0.55"/>
<rect x="1319" y="956" width="2" height="230" fill="#6ea3ff" opacity="0.55"/>
<rect x="1387" y="956" width="2" height="230" fill="#6ea3ff" opacity="0.55"/>
<rect x="1478.6" y="956" width="2" height="230" fill="#6ea3ff" opacity="0.55"/>
<rect x="1619" y="956" width="2" height="230" fill="#6ea3ff" opacity="0.55"/>
<rect x="1260" y="987" width="520" height="2" fill="#6ea3ff" opacity="0.55"/>
<rect x="1260" y="1014.6" width="520" height="2" fill="#6ea3ff" opacity="0.55"/>
<rect x="1260" y="1073.4" width="520" height="2" fill="#6ea3ff" opacity="0.55"/>
<rect x="1260" y="1133.4" width="520" height="2" fill="#6ea3ff" opacity="0.55"/>
<rect x="1260" y="1155.5" width="520" height="2" fill="#6ea3ff" opacity="0.55"/>
<path d="M1260 946 L1520 1206 M1260 1202 L1520 942" stroke="#6ea3ff" stroke-width="1.5" opacity="0.6"/>
<ellipse cx="1388" cy="1074.4" rx="128" ry="119" fill="none" stroke="#6ea3ff" stroke-width="1.5" opacity="0.6"/>
<ellipse cx="1388" cy="1074.4" rx="65.5" ry="60.7" fill="none" stroke="#a9c9ff" stroke-width="5"/>
<ellipse cx="1388" cy="1073.5" rx="91.3" ry="84.7" fill="none" stroke="#a9c9ff" stroke-width="5"/>
<ellipse cx="1388" cy="1074.4" rx="196" ry="182" fill="none" stroke="#a9c9ff" stroke-width="5"/>
<path d="M1420 993.2 H1556" stroke="#a9c9ff" stroke-width="5"/>
<path d="M1255 1026 L1299 1087" stroke="#a9c9ff" stroke-width="5"/>
<path d="M1424 1174 L1490 1084" stroke="#a9c9ff" stroke-width="5"/>
<rect x="1462.5" y="1120" width="104.5" height="80" rx="11" fill="#e1120f" filter="url(#sh)"/>
<path d="M1503 1139.5 L1534.5 1154 L1503 1168.5 Z" fill="#ffffff"/>
<text x="1613" y="1187" fill="#ffffff" font-family="Liberation Sans" font-size="64" font-weight="400" letter-spacing="1.5" >new</text>
</svg>
</svg>
</body></html>
